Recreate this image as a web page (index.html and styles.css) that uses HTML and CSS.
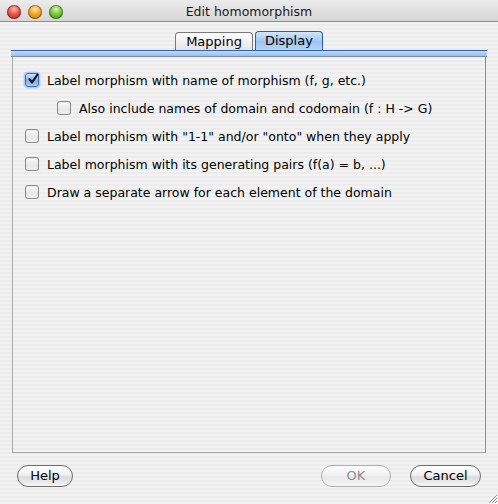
FILE: index.html
```html
<!DOCTYPE html>
<html>
<head>
<meta charset="utf-8">
<link rel="stylesheet" href="styles.css">
</head>
<body>
<div class="window">
  <div class="titlebar">
    <div class="lights">
      <span class="light red"></span>
      <span class="light yellow"></span>
      <span class="light green"></span>
    </div>
    <div class="title">Edit homomorphism</div>
  </div>
  <div class="tabs">
    <span class="tab">Mapping</span>
    <span class="tab active">Display</span>
  </div>
  <div class="tabline"></div>
  <div class="panel">
    <div class="row">
      <span class="cb checked"><svg viewBox="0 0 14 14" width="14" height="14"><path d="M3.5 7.2 L6 10.5 L11.5 2.5" fill="none" stroke="#111" stroke-width="2.2" stroke-linecap="round" stroke-linejoin="round"/></svg></span>
      <span class="label">Label morphism with name of morphism (f, g, etc.)</span>
    </div>
    <div class="row indent">
      <span class="cb"></span>
      <span class="label">Also include names of domain and codomain (f : H -&gt; G)</span>
    </div>
    <div class="row">
      <span class="cb"></span>
      <span class="label">Label morphism with "1-1" and/or "onto" when they apply</span>
    </div>
    <div class="row">
      <span class="cb"></span>
      <span class="label">Label morphism with its generating pairs (f(a) = b, ...)</span>
    </div>
    <div class="row">
      <span class="cb"></span>
      <span class="label">Draw a separate arrow for each element of the domain</span>
    </div>
  </div>
  <div class="buttons">
    <span class="btn help">Help</span>
    <span class="spacer"></span>
    <span class="btn ok disabled">OK</span>
    <span class="btn cancel">Cancel</span>
  </div>
  <svg class="grip" viewBox="0 0 12 12" width="12" height="12">
    <path d="M11 3 L3 11 M11 6 L6 11 M11 9 L9 11" stroke="#8a8a8a" stroke-width="1"/>
    <path d="M11.5 3.5 L3.5 11.5 M11.5 6.5 L6.5 11.5 M11.5 9.5 L9.5 11.5" stroke="#fff" stroke-width="1"/>
  </svg>
</div>
</body>
</html>
```
FILE: styles.css
```css
html, body {
  margin: 0;
  padding: 0;
}
body {
  font-family: "DejaVu Sans", "Liberation Sans", sans-serif;
  font-size: 12.5px;
  color: #000;
}
.window {
  position: relative;
  width: 498px;
  height: 504px;
  display: flex;
  flex-direction: column;
  background: repeating-linear-gradient(to bottom, #ececec 0, #ececec 2px, #f3f3f3 2px, #f3f3f3 4px);
  overflow: hidden;
}
.titlebar {
  position: relative;
  height: 21px;
  border-bottom: 1px solid #8e8e8e;
  background: linear-gradient(to bottom, #ececec, #d6d6d6);
  display: flex;
  align-items: center;
  justify-content: center;
  flex: none;
}
.lights {
  position: absolute;
  left: 7px;
  top: 5px;
  display: flex;
  gap: 7px;
}
.light {
  width: 14px;
  height: 14px;
  border-radius: 50%;
  box-shadow: inset 0 0 0 1px rgba(0,0,0,0.35);
}
.red { background: radial-gradient(circle at 50% 30%, #ffb8b0 0, #e8524a 45%, #b5201a 100%); }
.yellow { background: radial-gradient(circle at 50% 30%, #ffe6a8 0, #f2a626 45%, #c06d05 100%); }
.green { background: radial-gradient(circle at 50% 30%, #d8f5a8 0, #7cc43c 45%, #3e8a10 100%); }
.title {
  font-size: 12.5px;
  color: #1a1a1a;
  padding-top: 1px;
}
.tabs {
  margin-top: 10px;
  height: 18px;
  display: flex;
  justify-content: center;
  align-items: flex-end;
  flex: none;
}
.tab {
  height: 17px;
  line-height: 17px;
  padding: 0 10px;
  font-size: 13px;
  border: 1px solid #7a7a7a;
  border-bottom: none;
  border-radius: 4px 4px 0 0;
  background: linear-gradient(to bottom, #ffffff, #e4e4e4);
  margin-right: 2px;
}
.tab.active {
  height: 18px;
  border-color: #2b5fb3;
  background: linear-gradient(to bottom, #d3e6fb, #9cc4f2 55%, #b8d6f8);
  padding: 0 9px;
  margin-right: 0;
  position: relative;
  z-index: 1;
}
.tabline {
  margin: 0 11px;
  height: 5px;
  border-top: 1px solid #2f63b8;
  border-bottom: 1px solid #7a8ea8;
  background: linear-gradient(to bottom, #c6dcf7, #98bdea);
  flex: none;
}
.panel {
  box-sizing: border-box;
  margin: 0 12px;
  height: 396px;
  border: 1px solid #a7a7a7;
  border-right-color: #8a8a8a;
  border-top: none;
  padding: 9px 0 0 12px;
  flex: none;
}
.row {
  height: 28px;
  display: flex;
  align-items: center;
  gap: 8px;
}
.row.indent {
  padding-left: 32px;
}
.cb {
  width: 12px;
  height: 12px;
  border: 1px solid #8a8a8a;
  border-radius: 3px;
  background: linear-gradient(to bottom, #ffffff, #e6e6e6 60%, #f4f4f4);
  box-shadow: inset 0 1px 1px rgba(0,0,0,0.1);
  flex: none;
  position: relative;
}
.cb.checked {
  border-color: #3a6bb5;
  background: linear-gradient(to bottom, #cfe3fb, #7fb0ec 55%, #a9cdf6);
  box-shadow: 0 0 2px 1px rgba(90,150,230,0.6);
}
.cb svg {
  position: absolute;
  left: 0;
  top: -2px;
}
.label {
  white-space: nowrap;
}
.buttons {
  margin-top: 12px;
  padding: 0 17px;
  display: flex;
  align-items: center;
  gap: 19px;
  flex: none;
}
.spacer {
  flex: 1;
}
.btn {
  height: 20px;
  line-height: 20px;
  text-align: center;
  font-size: 13px;
  border: 1px solid #6e6e6e;
  border-radius: 11px;
  background: linear-gradient(to bottom, #ffffff, #f0f0f0 45%, #dcdcdc 55%, #f6f6f6);
}
.help { width: 54px; margin-right: -19px; }
.ok { width: 68px; }
.cancel { width: 69px; }
.btn.disabled {
  color: #8c8c8c;
  border-color: #b0b0b0;
  background: linear-gradient(to bottom, #fbfbfb, #f2f2f2 45%, #e8e8e8 55%, #f6f6f6);
}
.grip {
  position: absolute;
  right: 0;
  bottom: 0;
}
```
